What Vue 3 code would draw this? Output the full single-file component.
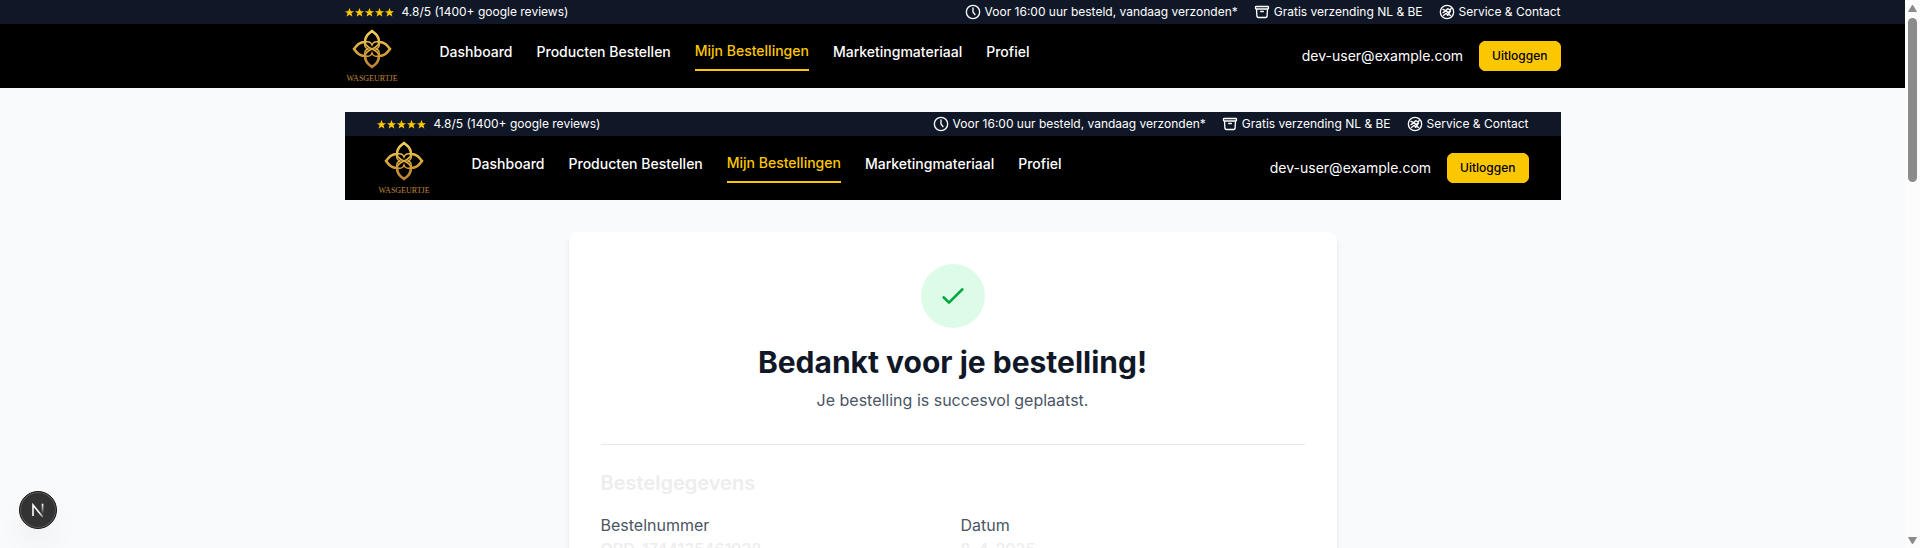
<script setup>
const headers = ['site', 'embedded']
const links = [
  { label: 'Dashboard' },
  { label: 'Producten Bestellen' },
  { label: 'Mijn Bestellingen', active: true },
  { label: 'Marketingmateriaal' },
  { label: 'Profiel' },
]
const notices = [
  {
    label: 'Voor 16:00 uur besteld, vandaag verzonden*',
    path: 'M12 6v6l3 4M22 12a10 10 0 1 1-20 0 10 10 0 0 1 20 0Z',
  },
  {
    label: 'Gratis verzending NL & BE',
    path: 'm20.25 7.5-.625 10.632a2.25 2.25 0 0 1-2.247 2.118H6.622a2.25 2.25 0 0 1-2.247-2.118L3.75 7.5M10 11.25h4M3.375 7.5h17.25c.621 0 1.125-.504 1.125-1.125v-1.5c0-.621-.504-1.125-1.125-1.125H3.375c-.621 0-1.125.504-1.125 1.125v1.5c0 .621.504 1.125 1.125 1.125Z',
  },
  {
    label: 'Service & Contact',
    path: 'M12 2a10 10 0 1 0 0 20 10 10 0 0 0 0-20ZM6 8l4 2 3-3 4 2 1-2M7 17l4-3 2 3 4-6M6 13l5-3 2 3 4-3M14 15l3 2',
  },
]
const details = [
  { label: 'Bestelnummer', value: 'ORD-1744135461938' },
  { label: 'Datum', value: '8-4-2025' },
]
</script>

<template>
  <div class="window">
    <div class="page">
      <header v-for="kind in headers" :key="kind" class="header" :class="kind">
        <div class="topbar">
          <div class="inner topbar-row">
            <div class="rating">
              <span class="stars" aria-hidden="true">
                <svg v-for="n in 5" :key="n" viewBox="0 0 20 20">
                  <path d="M10 0l2.800 7H20l-5.700 4.600 2.200 7.400L10 14.800 3.500 19l2.200-7.400L0 7h7.200z" />
                </svg>
              </span>
              <span>4.8/5 (1400+ google reviews)</span>
            </div>
            <ul class="notices">
              <li v-for="n in notices" :key="n.label">
                <svg viewBox="0 0 24 24" aria-hidden="true"><path :d="n.path" /></svg>
                <span>{{ n.label }}</span>
              </li>
            </ul>
          </div>
        </div>
        <div class="inner bar">
          <a class="logo" href="#">
            <svg viewBox="0 0 40 40" aria-hidden="true">
              <defs>
                <linearGradient :id="'gold-' + kind" gradientUnits="userSpaceOnUse" x1="0" y1="0" x2="0" y2="40">
                  <stop offset="0" stop-color="#f3d35a" />
                  <stop offset="0.5" stop-color="#dba93e" />
                  <stop offset="1" stop-color="#bd7f2b" />
                </linearGradient>
              </defs>
              <g fill="none" :stroke="`url(#gold-${kind})`">
                <path
                  stroke-width="2.600"
                  d="M20 2C16 5 13 7.500 13 13 7.500 13 5 16 2 20c3 4 5.500 7 11 7 0 5.500 3 8 7 11 4-3 7-5.500 7-11 5.500 0 8-3 11-7-3-4-5.500-7-11-7 0-5.500-3-8-7-11Z"
                />
                <path
                  stroke-width="1.600"
                  d="M13 13c0 3 2 5 7 7 5-2 7-4 7-7 0 3-3 5-7 7 4 2 7 4 7 7 0-3-2-5-7-7-5 2-7 4-7 7 0-3 3-5 7-7-4-2-7-4-7-7Z"
                />
                <path
                  stroke-width="1.400"
                  d="M13 13c4-1 6 0 7 3 1-3 3-4 7-3 1 4 0 6-3 7 3 1 4 3 3 7-4 1-6 0-7-3-1 3-3 4-7 3-1-4 0-6 3-7-3-1-4-3-3-7Z"
                />
              </g>
            </svg>
            <span>WASGEURTJE</span>
          </a>
          <nav class="nav">
            <a v-for="l in links" :key="l.label" href="#" :class="{ active: l.active }">{{ l.label }}</a>
          </nav>
          <div class="account">
            <span class="email">dev-user@example.com</span>
            <button type="button" class="logout">Uitloggen</button>
          </div>
        </div>
      </header>

      <main class="card">
        <div class="confirm">
          <div class="badge">
            <svg viewBox="0 0 24 24" aria-hidden="true"><path d="M5 13l4 4L19 7" /></svg>
          </div>
          <h1>Bedankt voor je bestelling!</h1>
          <p>Je bestelling is succesvol geplaatst.</p>
        </div>
        <section class="order">
          <h2>Bestelgegevens</h2>
          <dl>
            <div v-for="d in details" :key="d.label">
              <dt>{{ d.label }}</dt>
              <dd>{{ d.value }}</dd>
            </div>
          </dl>
        </section>
      </main>

      <button type="button" class="devtools" aria-label="Next.js">
        <svg viewBox="0 0 36 36" aria-hidden="true">
          <defs>
            <linearGradient id="stem" gradientUnits="userSpaceOnUse" x1="0" y1="12" x2="0" y2="22">
              <stop offset="0" stop-color="#fff" />
              <stop offset="1" stop-color="#fff" stop-opacity="0" />
            </linearGradient>
            <linearGradient id="slash" gradientUnits="userSpaceOnUse" x1="13" y1="13" x2="24" y2="26">
              <stop offset="0.6" stop-color="#fff" />
              <stop offset="1" stop-color="#fff" stop-opacity="0.2" />
            </linearGradient>
          </defs>
          <g fill="none" stroke-width="1.600">
            <path d="M13 24V13l9.800 12" stroke="url(#slash)" />
            <path d="M22.500 12.500h.1V21h-.1z" stroke="url(#stem)" />
          </g>
        </svg>
      </button>
    </div>
    <div class="scrollbar" aria-hidden="true">
      <svg viewBox="0 0 9 8"><path d="M4.500 0C5 0 5.500.5 9 7H0C3.500.5 4 0 4.500 0Z" /></svg>
      <div class="track"><div class="thumb"></div></div>
      <svg viewBox="0 0 9 8"><path d="M4.500 7C5 7 5.500 6.500 9 0H0C3.500 6.500 4 7 4.500 7Z" /></svg>
    </div>
  </div>
</template>

<style>
body {
  margin: 0;
  background: #f9fafb;
}
</style>

<style scoped>
* {
  box-sizing: border-box;
}
.window {
  display: flex;
  height: 100vh;
  overflow: hidden;
  font-family: Inter, 'Liberation Sans', sans-serif;
  font-size: 16px;
  line-height: 24px;
  color: #ededed;
}
.page {
  flex: 1;
  min-width: 0;
  overflow: hidden;
  background: #f9fafb;
}
a {
  color: inherit;
  text-decoration: none;
}
button {
  font-family: inherit;
  cursor: pointer;
}
.header {
  background: #000;
  color: #fff;
}
.embedded {
  max-width: 1216px;
  margin: 24px auto 0;
}
.inner {
  max-width: 1280px;
  margin: 0 auto;
  padding: 0 32px;
}
.topbar {
  background: #101828;
  font-size: 12px;
  line-height: 16px;
}
.topbar-row {
  display: flex;
  justify-content: space-between;
  padding-top: 4px;
  padding-bottom: 4px;
}
.rating {
  display: flex;
  gap: 8px;
}
.stars {
  display: flex;
  align-items: center;
  gap: 1px;
}
.stars svg {
  width: 9px;
  height: 9px;
  fill: #fdc700;
}
.notices {
  display: flex;
  gap: 16px;
  margin: 0;
  padding: 0;
  list-style: none;
}
.notices li {
  display: flex;
  align-items: center;
  gap: 4px;
}
.notices svg {
  width: 16px;
  height: 16px;
  fill: none;
  stroke: currentColor;
  stroke-width: 2;
  stroke-linecap: round;
  stroke-linejoin: round;
}
.bar {
  display: flex;
  align-items: center;
  height: 64px;
}
.logo {
  display: flex;
  flex-direction: column;
  align-items: center;
  width: 55px;
  margin-right: 40px;
  padding-top: 2px;
  font-family: 'Liberation Serif', serif;
  font-size: 8px;
  line-height: 12px;
  color: #c08a3a;
}
.logo svg {
  width: 40px;
  height: 40px;
  margin-bottom: 4px;
}
.nav {
  display: flex;
  gap: 24px;
  padding-bottom: 8px;
  font-size: 14px;
  font-weight: 500;
  line-height: 20px;
}
.nav a {
  display: flex;
  align-items: center;
  height: 38px;
}
.nav .active {
  border-bottom: 2px solid #fdc700;
  color: #fdc700;
}
.account {
  display: flex;
  align-items: center;
  gap: 16px;
  margin-left: auto;
}
.email {
  font-size: 14px;
  line-height: 20px;
}
.logout {
  padding: 6px 12px;
  border: 1px solid #fdc700;
  border-radius: 6px;
  background: #fdc700;
  color: #000;
  font-size: 12px;
  font-weight: 500;
  line-height: 16px;
}
.card {
  max-width: 768px;
  margin: 32px auto 0;
  padding: 32px;
  border-radius: 8px;
  background: #fff;
  box-shadow: 0 4px 6px -1px rgba(0, 0, 0, 0.1), 0 2px 4px -2px rgba(0, 0, 0, 0.1);
}
.confirm {
  padding-bottom: 32px;
  text-align: center;
}
.badge {
  display: flex;
  align-items: center;
  justify-content: center;
  width: 64px;
  height: 64px;
  margin: 0 auto 16px;
  border-radius: 50%;
  background: #dcfce7;
}
.badge svg {
  width: 32px;
  height: 32px;
  fill: none;
  stroke: #00a63e;
  stroke-width: 2;
  stroke-linecap: round;
  stroke-linejoin: round;
}
h1 {
  margin: 0 0 8px;
  font-size: 30px;
  font-weight: 700;
  line-height: 36px;
  color: #101828;
}
p {
  margin: 0;
  color: #4a5565;
}
.order {
  padding: 24px 0;
  border-top: 1px solid #e5e7eb;
}
h2 {
  margin: 0 0 16px;
  font-size: 20px;
  font-weight: 600;
  line-height: 28px;
}
dl {
  display: grid;
  grid-template-columns: 1fr 1fr;
  gap: 16px;
  margin: 0;
}
dt {
  color: #4a5565;
}
dd {
  margin: 0;
  font-weight: 500;
}
.devtools {
  position: fixed;
  left: 19px;
  bottom: 19px;
  width: 38px;
  height: 38px;
  padding: 0;
  border: 1px solid #171717;
  border-radius: 50%;
  background: #333;
  box-shadow: inset 0 0 0 1px #5c5c5c, 0 16px 32px -8px rgba(0, 0, 0, 0.12);
}
.devtools svg {
  display: block;
  width: 100%;
}
.scrollbar {
  display: flex;
  flex-direction: column;
  align-items: center;
  width: 15px;
  padding: 5px 0 3px;
  background: #fcfcfc;
}
.scrollbar svg {
  width: 9px;
  height: 8px;
  fill: #8b8b8b;
}
.track {
  flex: 1;
  width: 9px;
  padding: 5px 0;
}
.thumb {
  height: 32%;
  border-radius: 5px;
  background: #8b8b8b;
}
</style>
